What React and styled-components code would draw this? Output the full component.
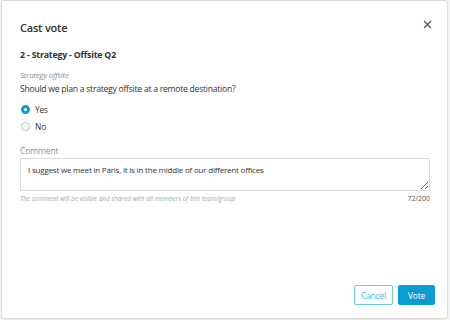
import React, { useState } from "react";
import styled, { createGlobalStyle } from "styled-components";

const GlobalStyle = createGlobalStyle`
  html, body {
    margin: 0;
    padding: 0;
    background: #f4f4f4;
    font-family: "Open Sans", "Liberation Sans", sans-serif;
  }
  * { box-sizing: border-box; }
`;

const blue = "#0b9dd1";

const Page = styled.div`
  width: 450px;
  height: 320px;
  padding: 1px 3px 2px 2px;
`;

const Modal = styled.div`
  width: 100%;
  height: 100%;
  background: #fff;
  border-radius: 2px;
  box-shadow: 0 0 0 1px #dcdcdc, 0 1px 3px rgba(0, 0, 0, 0.12);
  display: flex;
  flex-direction: column;
  padding: 17px 12px 13px 18px;
  color: #333;
`;

const Header = styled.div`
  display: flex;
  justify-content: space-between;
  align-items: center;
  height: 20px;
`;

const Title = styled.h1`
  margin: 0;
  font-size: 11px;
  letter-spacing: -0.2px;
  font-weight: 600;
  line-height: 20px;
`;

const Close = styled.button`
  border: 0;
  background: none;
  padding: 0;
  width: 12px;
  height: 12px;
  margin-top: -8px;
  margin-right: 2px;
  display: flex;
  align-items: center;
  justify-content: center;
  cursor: pointer;
`;

const Subtitle = styled.h2`
  margin: 8px 0 0;
  font-size: 8.8px;
  letter-spacing: -0.2px;
  font-weight: 700;
  line-height: 18px;
`;

const Category = styled.div`
  margin-top: 5px;
  font-size: 7.8px;
  letter-spacing: -0.15px;
  font-style: italic;
  color: #8a8f96;
  line-height: 12px;
`;

const Question = styled.div`
  font-size: 8.6px;
  letter-spacing: -0.25px;
  line-height: 16px;
`;

const Options = styled.div`
  margin-top: 4px;
  display: flex;
  flex-direction: column;
  gap: 1px;
`;

const Option = styled.label`
  display: flex;
  align-items: center;
  gap: 5px;
  height: 16px;
  font-size: 8.4px;
  letter-spacing: -0.15px;
  cursor: pointer;
`;

const Dot = styled.span`
  width: 9px;
  height: 9px;
  margin-left: 1px;
  border-radius: 50%;
  border: ${(p) => (p.$on ? `3px solid ${blue}` : "1px solid #b8bcc2")};
  background: #fff;
`;

const FieldLabel = styled.div`
  margin-top: 10px;
  font-size: 8.5px;
  letter-spacing: -0.1px;
  color: #8a8f96;
  line-height: 14px;
`;

const TextArea = styled.textarea`
  display: block;
  width: 410px;
  height: 33px;
  margin: 0;
  padding: 3px 7px;
  border: 1px solid #d8dbe0;
  border-radius: 2px;
  font-family: inherit;
  font-size: 8px;
  letter-spacing: -0.2px;
  line-height: 16px;
  color: #333;
  resize: vertical;
  outline: none;
`;

const Hint = styled.div`
  width: 410px;
  margin-top: 2px;
  display: flex;
  justify-content: space-between;
  font-size: 6.4px;
  line-height: 12px;
  color: #a5a9ae;
  font-style: italic;
`;

const Count = styled.span`
  font-style: normal;
  font-size: 7px;
  color: #555;
`;

const Footer = styled.div`
  margin-top: auto;
  display: flex;
  justify-content: flex-end;
  gap: 5px;
`;

const Button = styled.button`
  height: 20px;
  padding: 0 ${(p) => (p.$primary ? "9px" : "6px")};
  border-radius: 2px;
  border: 1px solid ${(p) => (p.$primary ? blue : "#6cc6e6")};
  background: ${(p) => (p.$primary ? blue : "#fff")};
  color: ${(p) => (p.$primary ? "#fff" : "#3fb3de")};
  font-family: inherit;
  font-size: 8.2px;
  letter-spacing: -0.1px;
  cursor: pointer;
`;

const App = () => {
  const [choice, setChoice] = useState("yes");
  const [comment, setComment] = useState(
    "I suggest we meet in Paris, it is in the middle of our different offices"
  );

  return (
    <>
      <GlobalStyle />
      <Page>
        <Modal>
          <Header>
            <Title>Cast vote</Title>
            <Close aria-label="Close">
              <svg width="9" height="9" viewBox="0 0 9 9">
                <path d="M1 1L8 8M8 1L1 8" stroke="#555" strokeWidth="1.2" />
              </svg>
            </Close>
          </Header>
          <Subtitle>2 - Strategy - Offsite Q2</Subtitle>
          <Category>Strategy offsite</Category>
          <Question>Should we plan a strategy offsite at a remote destination?</Question>
          <Options>
            <Option onClick={() => setChoice("yes")}>
              <Dot $on={choice === "yes"} />
              Yes
            </Option>
            <Option onClick={() => setChoice("no")}>
              <Dot $on={choice === "no"} />
              No
            </Option>
          </Options>
          <FieldLabel>Comment</FieldLabel>
          <TextArea value={comment} onChange={(e) => setComment(e.target.value)} />
          <Hint>
            <span>The comment will be visible and shared with all members of this team/group</span>
            <Count>{comment.length}/200</Count>
          </Hint>
          <Footer>
            <Button>Cancel</Button>
            <Button $primary>Vote</Button>
          </Footer>
        </Modal>
      </Page>
    </>
  );
};

export default App;
